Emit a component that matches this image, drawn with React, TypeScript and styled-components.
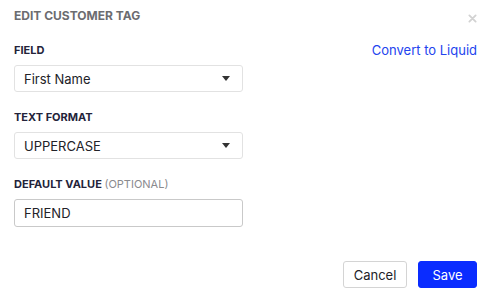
import React from "react";
import styled, { createGlobalStyle } from "styled-components";

const Global = createGlobalStyle`
  body {
    margin: 0;
    background: #ffffff;
    font-family: Inter, "Noto Sans", sans-serif;
  }
`;

export default function App() {
  return (
    <>
      <Global />
      <Modal>
        <HeaderRow>
          <Title>Edit Customer Tag</Title>
          <CloseIcon viewBox="0 0 10 10">
            <path d="M1.5 1.5 L8.5 8.5 M8.5 1.5 L1.5 8.5" stroke="#d2d2d2" strokeWidth="2" strokeLinecap="round" />
          </CloseIcon>
        </HeaderRow>

        <LabelRow>
          <Label>Field</Label>
          <LinkText>Convert to Liquid</LinkText>
        </LabelRow>
        <SelectBox>
          <span>First Name</span>
          <Caret />
        </SelectBox>

        <LabelRow>
          <Label>Text Format</Label>
        </LabelRow>
        <SelectBox>
          <span>UPPERCASE</span>
          <Caret />
        </SelectBox>

        <LabelRow>
          <Label>
            Default Value <Optional>(Optional)</Optional>
          </Label>
        </LabelRow>
        <TextInput defaultValue="FRIEND" />

        <Footer>
          <Button>Cancel</Button>
          <Button primary>Save</Button>
        </Footer>
      </Modal>
    </>
  );
}

const Modal = styled.div`
  width: 489px;
  height: 300px;
  box-sizing: border-box;
  padding: 8px 12px 0 14px;
  display: flex;
  flex-direction: column;
`;

const HeaderRow = styled.div`
  display: flex;
  justify-content: space-between;
  align-items: center;
  height: 16px;
`;

const Title = styled.div`
  font-size: 12px;
  line-height: 16px;
  font-weight: 700;
  text-transform: uppercase;
  color: #6c6c70;
`;

const CloseIcon = styled.svg`
  width: 9px;
  height: 9px;
  margin-top: 4px;
`;

const LabelRow = styled.div`
  display: flex;
  justify-content: space-between;
  align-items: center;
  height: 16px;
  margin-top: 17px;
  margin-bottom: 7px;

  &:nth-of-type(2) {
    margin-top: 18px;
  }
`;

const Label = styled.div`
  font-size: 11px;
  font-weight: 700;
  text-transform: uppercase;
  color: #23233a;
`;

const Optional = styled.span`
  font-weight: 400;
  color: #8a8a8e;
`;

const LinkText = styled.div`
  font-size: 13px;
  color: #2244ee;
`;

const SelectBox = styled.div`
  width: 229px;
  height: 27px;
  box-sizing: border-box;
  border: 1px solid #e2e2e2;
  border-radius: 3px;
  display: flex;
  align-items: center;
  justify-content: space-between;
  padding: 0 12px 0 9px;
  font-size: 13px;
  color: #222228;
`;

const Caret = styled.span`
  width: 0;
  height: 0;
  border-left: 4.5px solid transparent;
  border-right: 4.5px solid transparent;
  border-top: 5px solid #333;
`;

const TextInput = styled.input`
  width: 229px;
  height: 28px;
  box-sizing: border-box;
  border: 1px solid #c9c9c9;
  border-radius: 3px;
  padding: 0 9px;
  font-family: Inter, "Noto Sans", sans-serif;
  font-size: 13px;
  color: #222228;
  outline: none;
`;

const Footer = styled.div`
  display: flex;
  justify-content: flex-end;
  gap: 11px;
  margin-top: 34px;
`;

const Button = styled.button<{ primary?: boolean }>`
  height: 27px;
  width: ${(p) => (p.primary ? "59px" : "64px")};
  padding: 0;
  border-radius: 3px;
  font-family: Inter, "Noto Sans", sans-serif;
  font-size: 13px;
  border: 1px solid ${(p) => (p.primary ? "#0a2cff" : "#d4d4d4")};
  background: ${(p) => (p.primary ? "#0a2cff" : "#ffffff")};
  color: ${(p) => (p.primary ? "#ffffff" : "#222228")};
`;
